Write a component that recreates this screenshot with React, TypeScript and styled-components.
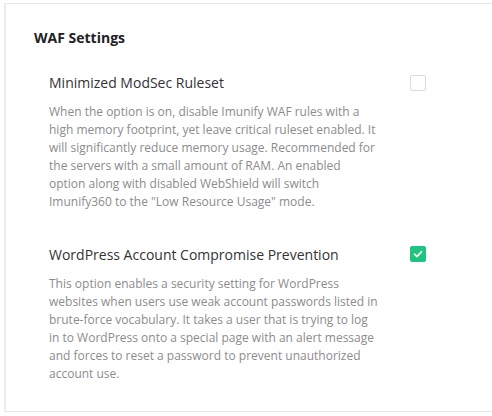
import React from 'react';
import styled, { createGlobalStyle } from 'styled-components';

const GlobalStyle = createGlobalStyle`
  html, body {
    margin: 0;
    padding: 0;
    background: #fff;
    overflow: hidden;
  }
  body {
    font-family: "Open Sans", "Liberation Sans", sans-serif;
  }
`;

const Page = styled.div`
  padding: 3px 0 0 4px;
  width: 492px;
  height: 416px;
  box-sizing: border-box;
  overflow: hidden;
`;

const Panel = styled.section`
  width: 540px;
  box-sizing: border-box;
  border: 1px solid #e8e8e8;
  border-right: none;
  border-left-width: 2px;
  border-left-color: #ececec;
  padding: 24px 0 28px 28px;
`;

const Heading = styled.h2`
  margin: 0 0 25px;
  font-size: 14px;
  line-height: 20px;
  font-weight: 700;
  color: #222;
`;

const Options = styled.div`
  display: flex;
  flex-direction: column;
  gap: 34px;
  padding-left: 15px;
  width: 377px;
`;

const Option = styled.div`
  display: flex;
  flex-direction: column;
  gap: 10px;
`;

const OptionHead = styled.div`
  display: flex;
  align-items: center;
  justify-content: space-between;
`;

const Title = styled.div`
  font-size: 14px;
  line-height: 20px;
  color: #333;
`;

const Description = styled.p`
  margin: 0;
  max-width: 330px;
  font-size: 12px;
  line-height: 18px;
  color: #8c8c8c;
`;

const Box = styled.span<{ $checked?: boolean }>`
  display: inline-flex;
  align-items: center;
  justify-content: center;
  width: 16px;
  height: 16px;
  box-sizing: border-box;
  border-radius: 2px;
  border: 1px solid ${(p) => (p.$checked ? '#1fc47f' : '#dcd9ec')};
  background: ${(p) => (p.$checked ? '#1fc47f' : '#fff')};
  margin-top: ${(p) => (p.$checked ? '-2px' : '-1px')};
`;

const Checkbox = ({ checked }: { checked?: boolean }) => (
  <Box $checked={checked}>
    {checked && (
      <svg width="12" height="12" viewBox="0 0 12 12" fill="none">
        <path d="M2.5 6.2 L5 8.6 L9.6 3.6" stroke="#fff" strokeWidth="1.6" strokeLinecap="round" strokeLinejoin="round" />
      </svg>
    )}
  </Box>
);

const options = [
  {
    title: 'Minimized ModSec Ruleset',
    checked: false,
    text: 'When the option is on, disable Imunify WAF rules with a high memory footprint, yet leave critical ruleset enabled. It will significantly reduce memory usage. Recommended for the servers with a small amount of RAM. An enabled option along with disabled WebShield will switch Imunify360 to the "Low Resource Usage" mode.',
  },
  {
    title: 'WordPress Account Compromise Prevention',
    checked: true,
    text: 'This option enables a security setting for WordPress websites when users use weak account passwords listed in brute-force vocabulary. It takes a user that is trying to log in to WordPress onto a special page with an alert message and forces to reset a password to prevent unauthorized account use.',
  },
];

export default function App() {
  return (
    <Page>
      <GlobalStyle />
      <Panel>
        <Heading>WAF Settings</Heading>
        <Options>
          {options.map((o) => (
            <Option key={o.title}>
              <OptionHead>
                <Title>{o.title}</Title>
                <Checkbox checked={o.checked} />
              </OptionHead>
              <Description>{o.text}</Description>
            </Option>
          ))}
        </Options>
      </Panel>
    </Page>
  );
}
